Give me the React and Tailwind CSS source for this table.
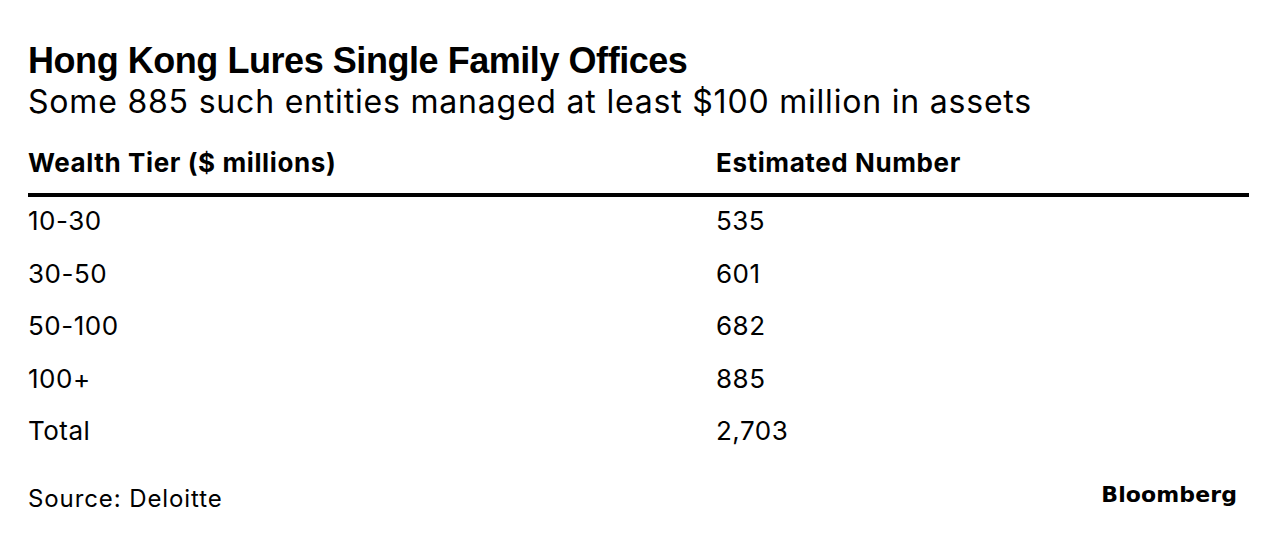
import React from "react";

const rows = [
  ["10-30", "535"],
  ["30-50", "601"],
  ["50-100", "682"],
  ["100+", "885"],
  ["Total", "2,703"],
];

export default function App() {
  return (
    <div className="w-[1277px] h-[540px] bg-white text-black px-[28px] pt-[40.8px] font-['Inter',sans-serif] overflow-hidden">
      <h1 className="text-[36px] leading-[40px] font-bold tracking-[-0.45px] whitespace-nowrap font-['Liberation_Sans',Arial,sans-serif]">
        Hong Kong Lures Single Family Offices
      </h1>
      <p className="mt-[1px] text-[32px] leading-[40px] tracking-[0.8px] whitespace-nowrap">
        Some 885 such entities managed at least $100 million in assets
      </p>
      <div className="mt-[26.5px] grid grid-cols-[688px_1fr] text-[26px] leading-[30px] font-bold tracking-[0.6px]">
        <div>Wealth Tier ($ millions)</div>
        <div>Estimated Number</div>
      </div>
      <div className="mt-[14.4px] h-[4px] bg-black" />
      <div className="flex flex-col">
        {rows.map(([a, b]) => (
          <div
            key={a}
            className="h-[52.6px] pt-[9.24px] grid grid-cols-[688px_1fr] text-[26px] leading-[30px] tracking-[0.5px]"
          >
            <div>{a}</div>
            <div>{b}</div>
          </div>
        ))}
      </div>
      <div className="mt-[21.5px] flex justify-between items-start">
        <div className="pt-[3px] text-[24px] leading-[30px] tracking-[0.9px]">
          Source: Deloitte
        </div>
        <div className="mr-[12px] pt-[2px] text-[22px] leading-[24px] font-bold tracking-[0.1px] font-['DejaVu_Sans',sans-serif]">
          Bloomberg
        </div>
      </div>
    </div>
  );
}
